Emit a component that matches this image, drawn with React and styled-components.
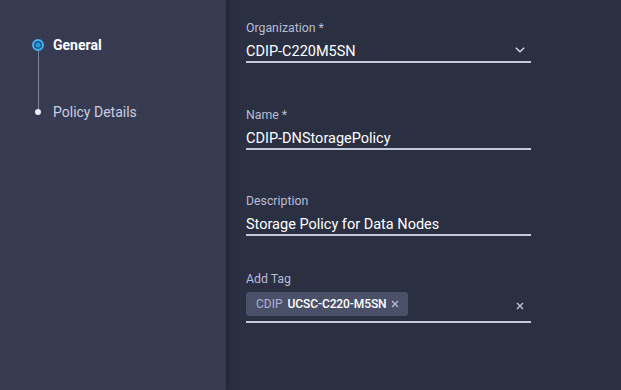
import React from "react";
import styled, { createGlobalStyle } from "styled-components";

const GlobalStyle = createGlobalStyle`
  html, body {
    margin: 0;
    padding: 0;
    background: #2b2f42;
  }
  body {
    font-family: Roboto, "Liberation Sans", sans-serif;
  }
`;

const Page = styled.div`
  display: flex;
  width: 621px;
  height: 390px;
  overflow: hidden;
`;

const Sidebar = styled.aside`
  width: 226px;
  flex-shrink: 0;
  background: #373b51;
  box-shadow: 2px 0 6px rgba(0, 0, 0, 0.28);
  position: relative;
  z-index: 1;
  padding: 35px 0 0 31px;
  box-sizing: border-box;
`;

const Steps = styled.div`
  display: grid;
  grid-template-columns: 14px auto;
  grid-template-rows: 20px 47px 20px;
  column-gap: 8px;
  align-items: center;
`;

const Marker = styled.div`
  justify-self: center;
  box-sizing: border-box;
  border-radius: 50%;
  width: ${p => (p.$active ? "12px" : "6px")};
  height: ${p => (p.$active ? "12px" : "6px")};
  background: ${p => (p.$active ? "#2598e2" : "#e8ebf4")};
  border: ${p => (p.$active ? "2px solid #45b0ee" : "none")};
  box-shadow: ${p => (p.$active ? "inset 0 0 0 1.5px #24507a" : "none")};
  position: relative;
  z-index: 1;
`;

const Connector = styled.div`
  justify-self: center;
  align-self: stretch;
  width: 1px;
  margin: -4px 0 -9px;
  background: #7d839b;
`;

const StepLabel = styled.div`
  font-size: 14px;
  font-weight: ${p => (p.$active ? 700 : 400)};
  color: ${p => (p.$active ? "#ffffff" : "#c9cde0")};
  white-space: nowrap;
`;

const Main = styled.main`
  flex: 1;
  background: #2b2f42;
  padding: 20px 0 0 20px;
  box-sizing: border-box;
`;

const Field = styled.div`
  width: 285px;
  margin-bottom: ${p => p.$gap || "43.5px"};
`;

const Label = styled.div`
  font-size: 12.3px;
  line-height: 16px;
  color: #b8bed5;
  margin-bottom: 2px;
`;

const InputRow = styled.div`
  display: flex;
  align-items: flex-end;
  justify-content: space-between;
  height: ${p => (p.$tall ? "27px" : "22px")};
  padding-bottom: ${p => (p.$tall ? "5px" : "1px")};
  padding-right: 6px;
  border-bottom: 2px solid #c3c8da;
`;

const Value = styled.div`
  font-size: 14.5px;
  line-height: 17px;
  color: #ffffff;
`;

const Chip = styled.div`
  display: flex;
  align-items: center;
  gap: 5px;
  height: 24px;
  padding: 0 9px 0 10px;
  background: #4b5069;
  border-radius: 3px;
  font-size: 12px;
`;

const ChipKey = styled.span`
  color: #aeb4cf;
`;

const ChipValue = styled.span`
  color: #ffffff;
  font-weight: 500;
  letter-spacing: -0.1px;
`;

const Cross = ({ size = 8, color = "#b9bed0" }) => (
  <svg width={size} height={size} viewBox="0 0 8 8">
    <path d="M1 1 L7 7 M7 1 L1 7" stroke={color} strokeWidth="1.2" />
  </svg>
);

const Chevron = () => (
  <svg width="10" height="6" viewBox="0 0 10 6">
    <path d="M0.8 0.8 L5 4.8 L9.2 0.8" stroke="#d6dae8" strokeWidth="1.3" fill="none" />
  </svg>
);

const ChevronBox = styled.div`
  display: flex;
  margin-bottom: 7px;
`;

const ClearBtn = styled.div`
  display: flex;
  margin-bottom: 6px;
  margin-right: 1px;
`;

export default function App() {
  return (
    <Page>
      <GlobalStyle />
      <Sidebar>
        <Steps>
          <Marker $active />
          <StepLabel $active>General</StepLabel>
          <Connector />
          <div />
          <Marker />
          <StepLabel>Policy Details</StepLabel>
        </Steps>
      </Sidebar>
      <Main>
        <Field>
          <Label>Organization *</Label>
          <InputRow>
            <Value>CDIP-C220M5SN</Value>
            <ChevronBox>
              <Chevron />
            </ChevronBox>
          </InputRow>
        </Field>
        <Field>
          <Label>Name *</Label>
          <InputRow>
            <Value>CDIP-DNStoragePolicy</Value>
          </InputRow>
        </Field>
        <Field $gap="35px">
          <Label>Description</Label>
          <InputRow>
            <Value>Storage Policy for Data Nodes</Value>
          </InputRow>
        </Field>
        <Field>
          <Label>Add Tag</Label>
          <InputRow $tall>
            <Chip>
              <ChipKey>CDIP</ChipKey>
              <ChipValue>UCSC-C220-M5SN</ChipValue>
              <Cross />
            </Chip>
            <ClearBtn>
              <Cross size={8} color="#c9cddc" />
            </ClearBtn>
          </InputRow>
        </Field>
      </Main>
    </Page>
  );
}
